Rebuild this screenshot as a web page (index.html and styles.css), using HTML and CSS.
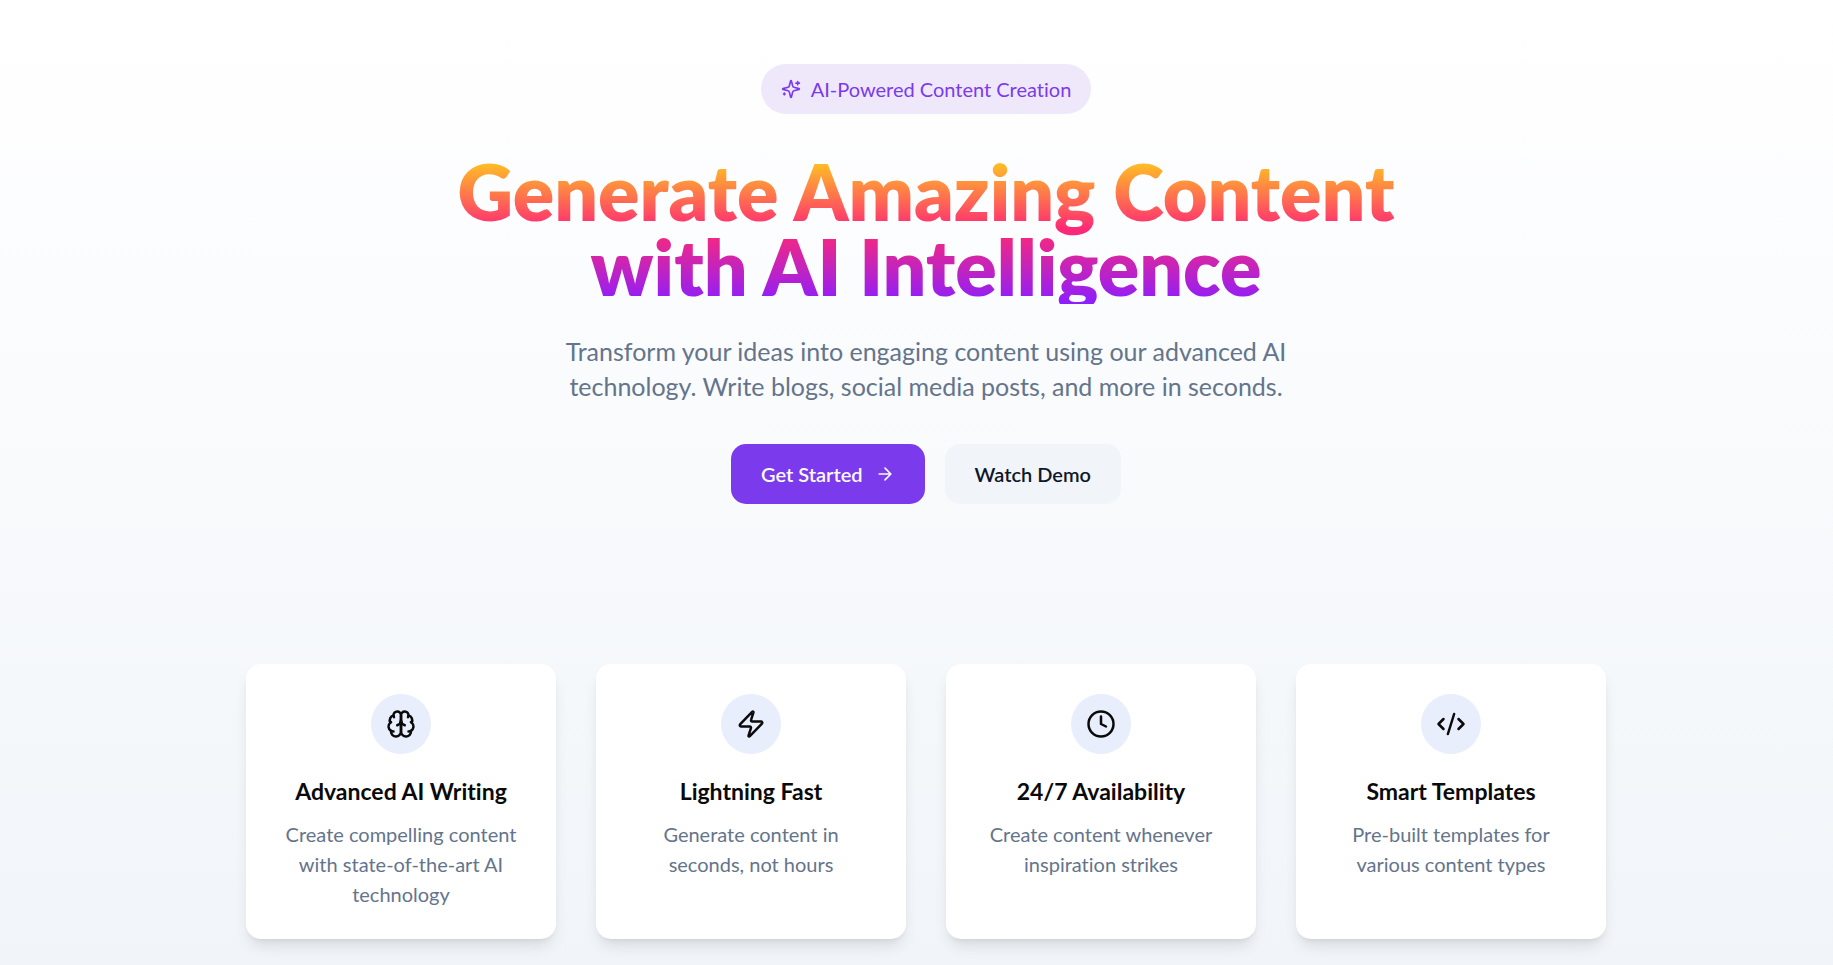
FILE: index.html
```
<!DOCTYPE html>
<html lang="en">
<head>
<meta charset="utf-8">
<meta name="viewport" content="width=device-width, initial-scale=1">
<title>AI Content Creation</title>
<link rel="stylesheet" href="styles.css">
</head>
<body>
<main class="page">
  <section class="hero">
    <div class="badge">
      <svg class="icon icon-sm" viewBox="0 0 24 24" aria-hidden="true"><path d="M9.937 15.5A2 2 0 0 0 8.5 14.063l-6.135-1.582a.5.5 0 0 1 0-.962L8.5 9.936A2 2 0 0 0 9.937 8.5l1.582-6.135a.5.5 0 0 1 .963 0L14.063 8.5A2 2 0 0 0 15.5 9.937l6.135 1.581a.5.5 0 0 1 0 .964L15.5 14.063a2 2 0 0 0-1.437 1.437l-1.582 6.135a.5.5 0 0 1-.963 0z"/><path d="M20 3v4M22 5h-4M4 17v2M5 18H3"/></svg>
      <span>AI-Powered Content Creation</span>
    </div>
    <h1 class="headline">Generate Amazing Content<br>with AI Intelligence</h1>
    <p class="lead">Transform your ideas into engaging content using our advanced AI<br>technology. Write blogs, social media posts, and more in seconds.</p>
    <div class="actions">
      <button class="button button-primary" type="button">Get Started
        <svg class="icon icon-sm" viewBox="0 0 24 24" aria-hidden="true"><path d="M5 12h14M12 5l7 7-7 7"/></svg>
      </button>
      <button class="button button-secondary" type="button">Watch Demo</button>
    </div>
  </section>
  <section class="features">
    <article class="card">
      <div class="card-icon"><svg class="icon icon-md" viewBox="0 0 24 24" aria-hidden="true"><path d="M12 5a3 3 0 1 0-5.997.125 4 4 0 0 0-2.526 5.77 4 4 0 0 0 .556 6.588A4 4 0 1 0 12 18Z"/><path d="M12 5a3 3 0 1 1 5.997.125 4 4 0 0 1 2.526 5.77 4 4 0 0 1-.556 6.588A4 4 0 1 1 12 18Z"/><path d="M15 13a4.5 4.5 0 0 1-3-4 4.5 4.5 0 0 1-3 4M17.599 6.5a3 3 0 0 0 .399-1.375M6.003 5.125A3 3 0 0 0 6.401 6.5M3.477 10.896a4 4 0 0 1 .585-.396M19.938 10.5a4 4 0 0 1 .585.396M6 18a4 4 0 0 1-1.967-.516M19.967 17.484A4 4 0 0 1 18 18"/></svg></div>
      <h2 class="card-title">Advanced AI Writing</h2>
      <p class="card-text">Create compelling content with state-of-the-art AI technology</p>
    </article>
    <article class="card">
      <div class="card-icon"><svg class="icon icon-md" viewBox="0 0 24 24" aria-hidden="true"><path d="M4 14a1 1 0 0 1-.78-1.63l9.9-10.2a.5.5 0 0 1 .86.46l-1.92 6.02A1 1 0 0 0 13 10h7a1 1 0 0 1 .78 1.63l-9.9 10.2a.5.5 0 0 1-.86-.46l1.92-6.02A1 1 0 0 0 11 14z"/></svg></div>
      <h2 class="card-title">Lightning Fast</h2>
      <p class="card-text">Generate content in seconds, not hours</p>
    </article>
    <article class="card">
      <div class="card-icon"><svg class="icon icon-md" viewBox="0 0 24 24" aria-hidden="true"><circle cx="12" cy="12" r="10"/><path d="M12 6v6l4 2"/></svg></div>
      <h2 class="card-title">24/7 Availability</h2>
      <p class="card-text">Create content whenever inspiration strikes</p>
    </article>
    <article class="card">
      <div class="card-icon"><svg class="icon icon-md" viewBox="0 0 24 24" aria-hidden="true"><path d="m18 16 4-4-4-4M6 8l-4 4 4 4M14.5 4l-5 16"/></svg></div>
      <h2 class="card-title">Smart Templates</h2>
      <p class="card-text">Pre-built templates for various content types</p>
    </article>
  </section>
</main>
</body>
</html>
```
FILE: styles.css
```
* {
  box-sizing: border-box;
  margin: 0;
}

body {
  font-family: Lato, "Open Sans", sans-serif;
  font-size: 20px;
  line-height: 30px;
  font-variant-ligatures: none;
  color: #0a0a0a;
}

.page {
  min-height: 100vh;
  padding: 64px 0 26px 19px;
  background: linear-gradient(to bottom, #ffffff, #f1f5f9);
}

.hero {
  display: flex;
  flex-direction: column;
  align-items: center;
  text-align: center;
}

.badge {
  display: flex;
  align-items: center;
  gap: 10px;
  padding: 10px 20px;
  border-radius: 25px;
  background: #efe8fb;
  color: #7c3aed;
}

.icon {
  flex: none;
  fill: none;
  stroke: currentColor;
  stroke-width: 2;
  stroke-linecap: round;
  stroke-linejoin: round;
}

.icon-sm {
  width: 20px;
  height: 20px;
}

.icon-md {
  width: 30px;
  height: 30px;
}

.headline {
  margin-top: 40px;
  font-size: 77px;
  line-height: 75px;
  font-weight: 800;
  color: transparent;
  background: linear-gradient(to bottom, #ffd319, #ff2975, #8c1eff);
  -webkit-background-clip: text;
  background-clip: text;
}

.lead {
  margin-top: 30px;
  font-size: 25px;
  line-height: 35px;
  color: #64748b;
}

.actions {
  display: flex;
  gap: 20px;
  margin-top: 40px;
}

.button {
  display: flex;
  align-items: center;
  gap: 10px;
  height: 60px;
  padding: 0 30px;
  border: 0;
  border-radius: 15px;
  font: inherit;
  font-weight: 600;
  cursor: pointer;
}

.button-primary {
  gap: 12px;
  background: #7c3aed;
  color: #f8fafc;
}

.button-secondary {
  background: #f1f5f9;
  color: #0f172a;
}

.features {
  display: grid;
  grid-template-columns: repeat(4, 1fr);
  gap: 40px;
  max-width: 1360px;
  margin: 160px auto 0;
}

.card {
  display: flex;
  flex-direction: column;
  align-items: center;
  padding: 30px;
  border-radius: 15px;
  background: #ffffff;
  box-shadow: 0 10px 15px -3px rgba(0, 0, 0, 0.1), 0 4px 6px -4px rgba(0, 0, 0, 0.1);
  text-align: center;
}

.card-icon {
  display: grid;
  place-items: center;
  width: 60px;
  height: 60px;
  border-radius: 50%;
  background: #e9eefd;
}

.card-title {
  margin-top: 20px;
  font-size: 23px;
  line-height: 35px;
  font-weight: 700;
}

.card-text {
  margin-top: 10px;
  color: #64748b;
}
```
